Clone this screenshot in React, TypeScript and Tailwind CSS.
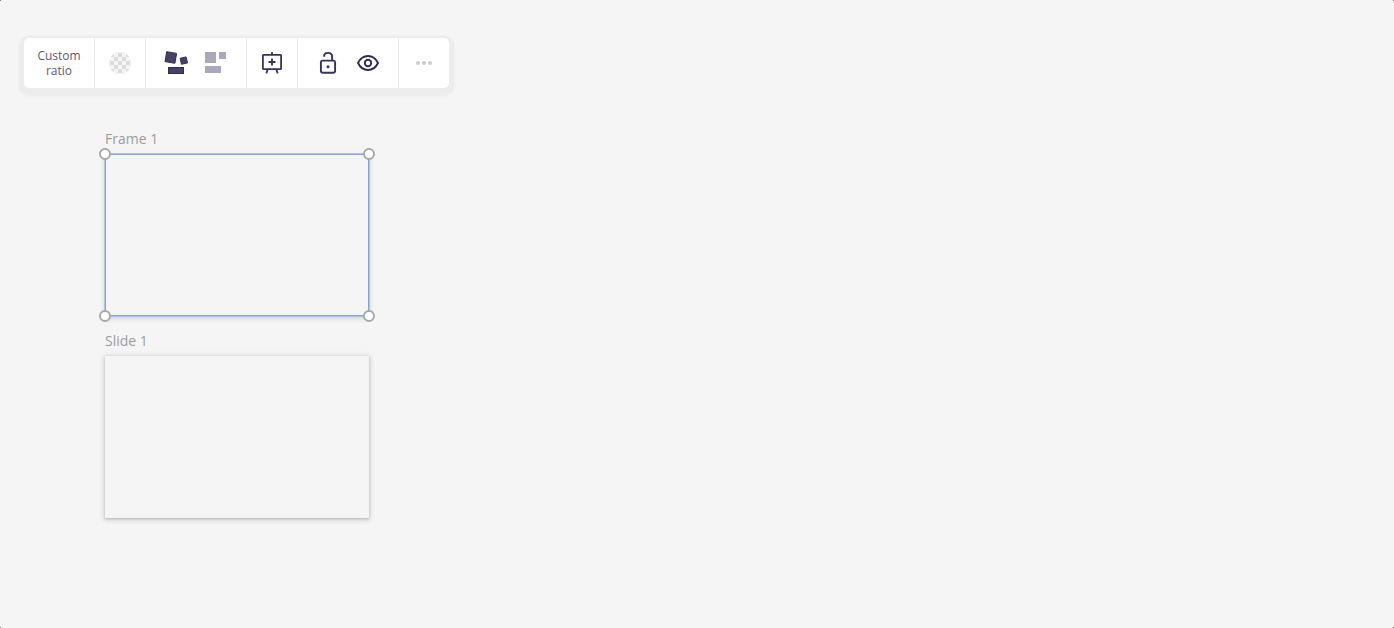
import type { ReactNode } from 'react';
import clsx from 'clsx';

type ToolGroupProps = {
  children: ReactNode;
  className?: string;
};

function ToolGroup({ children, className }: ToolGroupProps) {
  return (
    <div
      className={clsx(
        'flex h-full items-center justify-center border-r border-[#e9e9eb] last:border-r-0',
        className
      )}
    >
      {children}
    </div>
  );
}

type ToolButtonProps = {
  label: string;
  children: ReactNode;
};

function ToolButton({ label, children }: ToolButtonProps) {
  return (
    <button
      type="button"
      aria-label={label}
      className="flex h-full w-10 items-center justify-center"
    >
      {children}
    </button>
  );
}

// All toolbar icons share a 24x24 box
function TransparentIcon() {
  return (
    <svg width="24" height="24" viewBox="0 0 24 24">
      <defs>
        <pattern
          id="checker"
          x="2"
          y="2"
          width="8"
          height="8"
          patternUnits="userSpaceOnUse"
        >
          <rect width="8" height="8" fill="#f5f5f5" />
          <rect width="4" height="4" fill="#dcdcdc" />
          <rect x="4" y="4" width="4" height="4" fill="#dcdcdc" />
        </pattern>
      </defs>
      <circle cx="12" cy="12" r="11" fill="url(#checker)" />
    </svg>
  );
}

function FreeformIcon() {
  return (
    <svg
      width="24"
      height="24"
      viewBox="0 0 24 24"
      fill="#474165"
      stroke="#322c55"
      strokeWidth="1"
    >
      <path d="M2.700 .700l9.900 1.700l-1.700 9.900l-9.900-1.700z" />
      <path d="M16.100 7.300l6-1.400l1.400 6l-6 1.400z" />
      <rect x="4.500" y="16.500" width="15" height="6" />
    </svg>
  );
}

function GridLayoutIcon() {
  return (
    <svg width="24" height="24" viewBox="0 0 24 24" fill="#aaa8ba">
      <rect x="1" y="1" width="11" height="11" />
      <rect x="15" y="1" width="7" height="7" />
      <rect x="1" y="15" width="16" height="7" />
    </svg>
  );
}

function PresentIcon() {
  return (
    <svg
      width="24"
      height="24"
      viewBox="0 0 24 24"
      fill="none"
      stroke="#38325a"
      strokeWidth="1.8"
    >
      <rect x="2.9" y="3.9" width="18.2" height="14.2" rx="0.6" />
      <path d="M12 1v3M12 7.500v7M8.500 11h7M7.800 18l-1.500 4.400M16.200 18l1.500 4.400" />
    </svg>
  );
}

function UnlockIcon() {
  return (
    <svg
      width="24"
      height="24"
      viewBox="0 0 24 24"
      fill="none"
      stroke="#38325a"
      strokeWidth="1.9"
    >
      <rect x="4.9" y="9.6" width="14.2" height="12.2" rx="2" />
      <path d="M8.100 5.700V5.300c0-2 1.500-3.400 3.900-3.400s4.100 1.500 4.100 3.600V9.600" />
      <circle cx="12" cy="15.7" r="1.5" fill="#38325a" stroke="none" />
    </svg>
  );
}

function EyeIcon() {
  return (
    <svg
      width="24"
      height="24"
      viewBox="0 0 24 24"
      fill="none"
      stroke="#302a52"
      strokeWidth="1.9"
    >
      <path d="M2 12C4.300 7.300 7.600 5 12 5s7.700 2.300 10 7c-2.300 4.700-5.600 7-10 7S4.300 16.700 2 12z" />
      <circle cx="12" cy="12" r="3.2" />
    </svg>
  );
}

function MoreIcon() {
  return (
    <svg width="24" height="24" viewBox="0 0 24 24" fill="#cbcbcd">
      <circle cx="6" cy="12" r="2" />
      <circle cx="12" cy="12" r="2" />
      <circle cx="18" cy="12" r="2" />
    </svg>
  );
}

function Toolbar() {
  return (
    <div className="flex h-[50px] w-[425px] rounded-[5px] bg-white shadow-[0_3px_3px_5px_#ececec,0_3px_1px_5px_#eeeeee]">
      <ToolGroup className="w-[71px]">
        <button
          type="button"
          className="text-center text-[12px] leading-[15px] text-[#5c5870]"
        >
          Custom
          <br />
          ratio
        </button>
      </ToolGroup>
      <ToolGroup className="w-[51px]">
        <ToolButton label="Background">
          <TransparentIcon />
        </ToolButton>
      </ToolGroup>
      <ToolGroup className="w-[101px]">
        <ToolButton label="Freeform">
          <FreeformIcon />
        </ToolButton>
        <ToolButton label="Grid">
          <GridLayoutIcon />
        </ToolButton>
      </ToolGroup>
      <ToolGroup className="w-[51px]">
        <ToolButton label="Present">
          <PresentIcon />
        </ToolButton>
      </ToolGroup>
      <ToolGroup className="w-[101px]">
        <ToolButton label="Lock">
          <UnlockIcon />
        </ToolButton>
        <ToolButton label="Hide">
          <EyeIcon />
        </ToolButton>
      </ToolGroup>
      <ToolGroup className="w-[50px]">
        <ToolButton label="More">
          <MoreIcon />
        </ToolButton>
      </ToolGroup>
    </div>
  );
}

// Resize handles, centered on the frame's corners
const handles = [
  '-top-[7px] -left-[7px]',
  '-top-[7px] -right-[7px]',
  '-bottom-[7px] -left-[7px]',
  '-bottom-[7px] -right-[7px]',
];

type FrameProps = {
  title: string;
  selected?: boolean;
};

function Frame({ title, selected = false }: FrameProps) {
  return (
    <section className="w-[266px]">
      <h2 className="h-6 pt-px pl-px text-[14px] leading-4 text-[#9c9c9c]">
        {title}
      </h2>
      <div
        className={clsx(
          'relative mx-px mb-px h-[162px]',
          selected
            ? 'border border-[#85a4d2] shadow-[0_0_0_1px_#b4c3de,0_2px_4px_1px_#d2d5dc]'
            : 'bg-[#f5f5f5] shadow-[0_1px_2px_#bdbdbd,0_1px_5px_1px_#d0d0d0]'
        )}
      >
        {selected &&
          handles.map((position) => (
            <span
              key={position}
              className={clsx(
                'absolute h-3 w-3 rounded-full border-2 border-[#a8a8a8] bg-white',
                position
              )}
            />
          ))}
      </div>
    </section>
  );
}

export default function App() {
  return (
    <main className="relative h-[628px] w-full overflow-hidden bg-[#f5f5f5] pt-[38px] pl-6 font-['Open_Sans',sans-serif]">
      <Toolbar />
      <div className="mt-[42px] ml-20 flex flex-col gap-[15px]">
        <Frame title="Frame 1" selected />
        <Frame title="Slide 1" />
      </div>
      {/* Dark window corners behind the canvas */}
      <span className="absolute top-0 left-0 h-px w-px bg-[#777]" />
      <span className="absolute top-0 right-0 h-px w-px bg-[#777]" />
      <span className="absolute bottom-0 left-0 h-px w-px bg-[#777]" />
      <span className="absolute right-0 bottom-0 h-px w-px bg-[#777]" />
    </main>
  );
}
